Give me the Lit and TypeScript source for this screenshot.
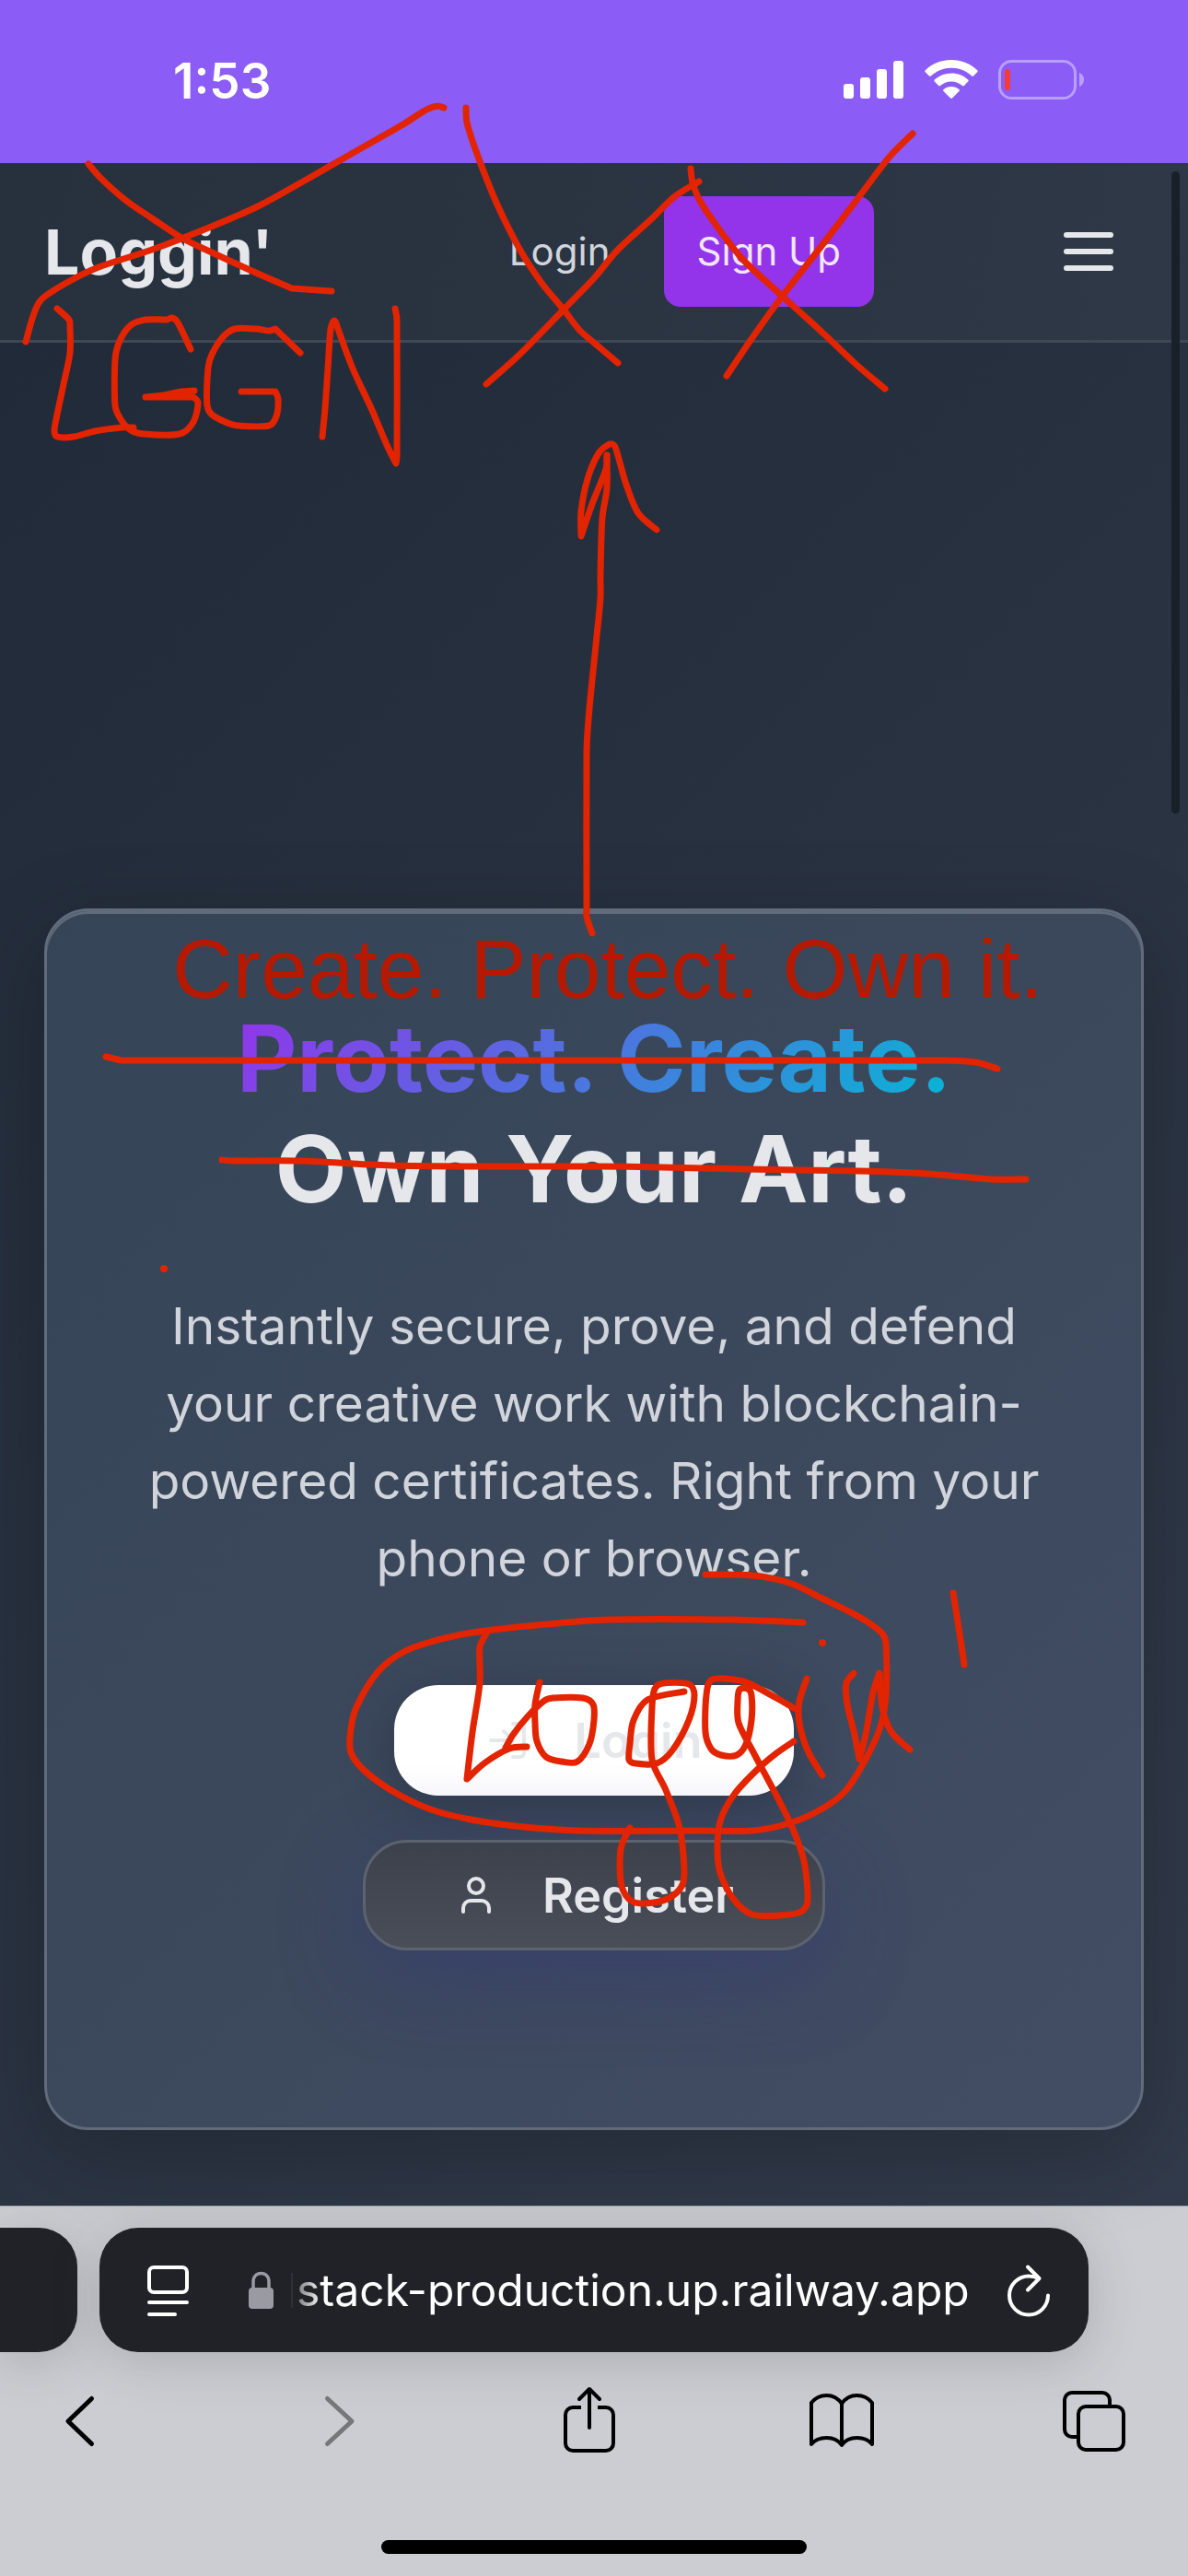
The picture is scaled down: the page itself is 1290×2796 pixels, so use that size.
import { LitElement, html, svg, css } from "lit";
import { customElement } from "lit/decorators.js";

type Point = [number, number];

// Pen strokes on the markup layer, as x,y pairs. A repeated point makes a sharp corner.
const STROKES: string[] = [
  "28,371 36,343 45,325 74,306 107,290 165,271 222,249 280,224 329,197 378,169 436,136 463,119 475,115 482,117",
  "96,178 109,193 136,217 165,237 197,258 230,274 280,297 317,313 317,313 360,316",
  "62,335 75,347 76,355 76,383 69,417 62,450 59,467 62,474 80,474 103,468 132,464 145,464",
  "207,379 193,350 187,345 181,347 158,347 142,353 130,370 125,390 125,440 131,455 142,467 156,471 195,471 210,458 215,437 210,431 210,431 158,431 158,431 177,429 197,425 211,424",
  "326,383 299,357 299,357 293,359 278,357 255,357 241,367 228,390 225,413 225,440 230,450 247,459 259,462 292,462 300,452 302,433 299,425 299,425 262,425",
  "350,474 353,443 356,400 359,357 363,348 367,357 383,400 403,443 420,483 430,503 430,503 431,495 431,347 429,335",
  "506,117 507,133 518,167 539,220 564,270 588,307 612,336 629,358 645,372 671,394",
  "528,417 564,385 612,336 645,302 670,272 707,238 733,213 759,197",
  "750,183 752,198 760,218 781,249 807,282 849,321 892,360 929,395 961,422",
  "991,145 966,170 937,208 892,267 849,322 818,365 789,408",
  "643,1013 637,995 637,985 637,815 640,769 647,700 652,649 652,624 654,562 659,530 659,494",
  "659,494 658,509 643,547 631,582 631,582 631,555 638,520 650,492 662,482 668,485 680,526 693,557 713,575",
  "115,1147 132,1151 132,1151 1028,1151 1028,1151 1060,1153 1083,1160",
  "241,1259 255,1260 325,1260 424,1265 535,1266 645,1266 719,1267 810,1269 933,1271 1007,1274 1077,1280 1114,1280",
  "872,1761 793,1758 660,1758 593,1763 527,1770 483,1778 440,1792 410,1815 387,1853 381,1877 381,1902 397,1923 433,1948 477,1967 543,1980 627,1987 753,1987 817,1987 860,1978 893,1963 917,1945 937,1915 955,1877 962,1840 962,1784 957,1772 933,1755 893,1735 857,1718 817,1710 766,1709",
  "528,1773 521,1788 521,1827 513,1880 507,1931 507,1931 527,1913 553,1898 572,1896",
  "586,1826 581,1850 581,1870 583,1890 593,1907 610,1912 627,1912 640,1893 645,1867 644,1850 633,1843 600,1843 591,1846 573,1863 557,1883 549,1897",
  "743,1836 703,1845 688,1867 684,1893 683,1910 690,1914 713,1914 730,1900 748,1867 754,1840 748,1828 720,1827 711,1833 708,1853 708,1910 723,1943 737,1980 742,2013 742,2043 730,2058 710,2065 687,2064 675,2047 674,2007 684,1984",
  "862,1854 843,1843 813,1827 797,1823 773,1823 767,1840 766,1880 772,1898 783,1905 800,1905 810,1893 816,1867 816,1840 812,1833 803,1834 801,1847 802,1870 817,1900 840,1943 860,1983 873,2020 877,2063 870,2075 847,2079 817,2078 797,2062 782,2033 779,2007 782,1977 797,1948 823,1920 843,1903 862,1890",
  "876,1822 868,1847 868,1870 877,1900 893,1927",
  "927,1816 919,1827 920,1850 928,1883 933,1909 933,1909 940,1883 948,1837 955,1816 955,1816 958,1853 968,1880 988,1899",
  "1035,1729 1042,1773 1047,1807",
];

// Smooth curve through every point of a stroke.
function smooth(data: string): string {
  const p = data.split(" ").map((s) => s.split(",").map(Number) as Point);
  let d = `M${p[0][0]} ${p[0][1]}`;
  for (let i = 0; i < p.length - 1; i++) {
    const a = p[Math.max(i - 1, 0)];
    const b = p[i];
    const c = p[i + 1];
    const e = p[Math.min(i + 2, p.length - 1)];
    const len = Math.hypot(c[0] - b[0], c[1] - b[1]);
    if (len === 0) continue;
    const handle = (v: Point): Point => {
      const m = Math.hypot(v[0], v[1]) || 1;
      const k = Math.min(m / 6, len / 3) / m;
      return [v[0] * k, v[1] * k];
    };
    const h1 = handle([c[0] - a[0], c[1] - a[1]]);
    const h2 = handle([e[0] - b[0], e[1] - b[1]]);
    d += `C${(b[0] + h1[0]).toFixed(1)} ${(b[1] + h1[1]).toFixed(1)} ${(c[0] - h2[0]).toFixed(1)} ${(c[1] - h2[1]).toFixed(1)} ${c[0]} ${c[1]}`;
  }
  return d;
}

@customElement("status-bar")
class StatusBar extends LitElement {
  static styles = css`
    :host {
      display: flex;
      justify-content: space-between;
      height: 177px;
      box-sizing: border-box;
      padding: 56px 112px 0 188px;
      background: #8b5cf6;
      color: #fff;
      font-family: Inter, "Liberation Sans", sans-serif;
    }
    .time {
      font-size: 53px;
      line-height: 64px;
      font-weight: 600;
    }
    .status {
      display: flex;
      gap: 22px;
      padding-top: 8px;
    }
    .status svg {
      display: block;
      height: 46px;
    }
  `;
  render() {
    return html`
      <time class="time">1:53</time>
      <div class="status">
        <svg width="66" height="46" viewBox="0 0 66 46" fill="#fff" aria-hidden="true">
          <rect x="0" y="27" width="11" height="16" rx="3" />
          <rect x="18" y="20" width="11" height="23" rx="3" />
          <rect x="36" y="11" width="11" height="32" rx="3" />
          <rect x="54" y="2" width="11" height="41" rx="3" />
        </svg>
        <svg width="58" height="46" viewBox="0 0 58 46" fill="#fff" aria-hidden="true">
          <path d="M29 1C18 1 8 5 .8 12.2c-.7.7-.7 1.4 0 2L5 18.6c.6.6 1.2.6 1.8 0C12.800 13 20.500 9.800 29 9.800s16.200 3.200 22.200 8.800c.6.6 1.200.6 1.800 0l4.200-4.400c.7-.6.7-1.300 0-2C50 5 40 1 29 1z" />
          <path d="M29 15.600c-7 0-13.400 2.600-18.200 7-.7.7-.7 1.300 0 2l4.400 4.400c.6.6 1.200.6 1.800 0 3.200-2.900 7.400-4.600 12-4.600s8.800 1.700 12 4.600c.6.6 1.200.6 1.800 0l4.400-4.400c.7-.7.7-1.300 0-2-4.800-4.400-11.200-7-18.200-7z" />
          <path d="M29 30c-3.200 0-6.200 1.200-8.400 3-.7.7-.7 1.300-.1 2l7.500 7.600c.7.6 1.300.6 2 0l7.500-7.600c.6-.7.6-1.300-.1-2-2.200-1.800-5.200-3-8.400-3z" />
        </svg>
        <svg width="94" height="46" viewBox="0 0 94 46" aria-hidden="true">
          <rect x="1.500" y="2.500" width="82" height="40" rx="13" fill="none" stroke="#b99ffa" stroke-width="3" />
          <path d="M88 15c3 1 5 4 5 7.500s-2 6.500-5 7.500z" fill="#b99ffa" />
          <rect x="7" y="11" width="6" height="23" rx="3" fill="#f83a36" />
        </svg>
      </div>
    `;
  }
}

@customElement("site-nav")
class SiteNav extends LitElement {
  static styles = css`
    :host {
      display: flex;
      align-items: center;
      padding: 0 48px;
      height: 195px;
      box-sizing: border-box;
      border-bottom: 3px solid #404855;
      background: linear-gradient(100deg, #27303d, #2e3846);
      font-family: Inter, "Liberation Sans", sans-serif;
    }
    a {
      text-decoration: none;
    }
    .brand {
      color: #e5e7eb;
      font-size: 68px;
      font-weight: 700;
      line-height: 96px;
    }
    .links {
      display: flex;
      align-items: center;
      gap: 58px;
      margin-left: auto;
      margin-right: 173px;
      font-size: 42px;
      line-height: 60px;
    }
    .login {
      color: #d1d5db;
    }
    .signup {
      padding: 30px 36px;
      border-radius: 18px;
      background: #9333ea;
      color: #f1e6fd;
    }
    .menu {
      display: flex;
      flex-direction: column;
      align-items: center;
      justify-content: center;
      gap: 12px;
      width: 120px;
      height: 120px;
      padding: 0;
      border: 0;
      background: none;
    }
    .bar {
      width: 54px;
      height: 6px;
      border-radius: 3px;
      background: #e5e7eb;
    }
  `;
  render() {
    return html`
      <a class="brand" href="#">Loggin'</a>
      <nav class="links">
        <a class="login" href="#login">Login</a>
        <a class="signup" href="#signup">Sign Up</a>
      </nav>
      <button class="menu" aria-label="Menu">
        <span class="bar"></span><span class="bar"></span><span class="bar"></span>
      </button>
    `;
  }
}

@customElement("hero-card")
class HeroCard extends LitElement {
  static styles = css`
    :host {
      display: block;
      padding: 99px 48px 192px;
      border: 3px solid #606b7b;
      border-radius: 48px;
      background: linear-gradient(135deg, #354457, #3b485b 45%, #424d64);
      box-shadow: inset 0 3px #606b7b, 0 24px 96px rgba(0, 0, 0, 0.24);
      text-align: center;
      font-family: Inter, "Liberation Sans", sans-serif;
    }
    h1 {
      margin: 0 0 69px;
      color: #e5e7eb;
      font-size: 101px;
      line-height: 120px;
      font-weight: 700;
    }
    .accent {
      background: linear-gradient(135deg, #9333ea, #06b6d4);
      -webkit-background-clip: text;
      background-clip: text;
      color: transparent;
    }
    p {
      margin: 0 0 96px;
      color: #d1d5db;
      font-size: 55px;
      line-height: 84px;
    }
    .actions {
      display: flex;
      flex-direction: column;
      align-items: center;
      gap: 48px;
    }
    .action {
      display: flex;
      align-items: center;
      gap: 48px;
      height: 120px;
      padding: 0 96px;
      border: 3px solid #5d636e;
      border-radius: 48px;
      font-family: inherit;
      font-size: 52px;
      font-weight: 600;
      color: #e5e7eb;
    }
    .action svg {
      width: 48px;
      height: 48px;
      fill: none;
      stroke: currentColor;
      stroke-width: 2;
      stroke-linecap: round;
      stroke-linejoin: round;
    }
    .primary {
      border-color: transparent;
      background: linear-gradient(#fff 70%, #f9f9fc) border-box;
      box-shadow: 0 12px 60px rgba(25, 32, 48, 0.4);
    }
    .secondary {
      background: linear-gradient(#3c414c, #4a4e59) padding-box;
      box-shadow: 0 30px 90px rgba(47, 52, 125, 0.42);
    }
  `;
  render() {
    return html`
      <h1><span class="accent">Protect. Create.</span><br />Own Your Art.</h1>
      <p>
        Instantly secure, prove, and defend<br />your creative work with blockchain-<br />powered
        certificates. Right from your<br />phone or browser.
      </p>
      <div class="actions">
        <button class="action primary">
          <svg viewBox="0 0 24 24" aria-hidden="true">
            <path d="M15 3h4a2 2 0 0 1 2 2v14a2 2 0 0 1-2 2h-4M10 17l5-5-5-5M15 12H3" />
          </svg>
          Login
        </button>
        <button class="action secondary">
          <svg viewBox="0 0 24 24" aria-hidden="true">
            <path d="M19 21v-2a4 4 0 0 0-4-4H9a4 4 0 0 0-4 4v2" />
            <circle cx="12" cy="7" r="4" />
          </svg>
          Register
        </button>
      </div>
    `;
  }
}

@customElement("browser-bar")
class BrowserBar extends LitElement {
  static styles = css`
    :host {
      display: block;
      flex: 1;
      border-top: 1px solid #a0a6b2;
      background: #cccdd2;
      padding: 23px 0 24px;
      font-family: Inter, "Liberation Sans", sans-serif;
      overflow: hidden;
    }
    button {
      display: block;
      padding: 0;
      border: 0;
      background: none;
      font: inherit;
      color: inherit;
    }
    svg {
      display: block;
      fill: none;
      stroke: currentColor;
      stroke-width: 4;
      stroke-linecap: round;
      stroke-linejoin: round;
    }
    .tabs {
      display: flex;
      gap: 24px;
      padding-right: 108px;
    }
    .tab {
      height: 135px;
      border-radius: 42px;
      background: #202227;
      color: #fff;
      box-shadow: 0 10px 54px rgba(60, 64, 72, 0.22);
    }
    .previous {
      flex: 0 0 84px;
      border-radius: 0 42px 42px 0;
    }
    .current {
      display: flex;
      flex: 1;
      align-items: center;
      padding: 0 40px 0 50px;
    }
    .lock {
      margin-left: 60px;
    }
    .cut {
      width: 2px;
      height: 38px;
      margin: 0 4px 0 18px;
      background: #2e3035;
    }
    .address {
      flex: 1;
      text-align: left;
      white-space: nowrap;
      font-size: 48px;
      line-height: 60px;
      -webkit-mask-image: linear-gradient(90deg, rgba(0, 0, 0, 0.4), #000 28px);
      mask-image: linear-gradient(90deg, rgba(0, 0, 0, 0.4), #000 28px);
    }
    .tools {
      display: flex;
      justify-content: space-between;
      margin-top: 27px;
      padding: 0 54px 0 38px;
      color: #000;
    }
    .tools svg {
      width: 96px;
      height: 96px;
    }
    .forward {
      color: #76777b;
    }
    .home {
      width: 462px;
      height: 15px;
      margin: 81px auto 0;
      border-radius: 8px;
      background: #000;
    }
  `;
  render() {
    return html`
      <div class="tabs">
        <div class="tab previous"></div>
        <div class="tab current">
          <button aria-label="Page settings">
            <svg width="50" height="60" viewBox="0 0 50 60">
              <path d="M9 5h31a5 5 0 0 1 5 5v17a5 5 0 0 1-5 5H9a5 5 0 0 1-5-5V10a5 5 0 0 1 5-5zM4 43h41M4 56h28" />
            </svg>
          </button>
          <svg class="lock" width="30" height="42" viewBox="0 0 30 42" aria-hidden="true">
            <rect x="2" y="18" width="27" height="23" rx="4" fill="#9a9aa3" stroke="none" />
            <path d="M7 19v-7c0-6 3.500-9.500 8.500-9.500S24 6 24 12v7" stroke="#9a9aa3" stroke-width="3.500" />
          </svg>
          <span class="cut"></span>
          <button class="address">stack-production.up.railway.app</button>
          <button aria-label="Reload">
            <svg width="48" height="60" viewBox="0 0 48 60">
              <path d="M44 35.500A21 21 0 1 1 23 14.500c4 0 7 .8 11 2.500M22 4.500L34.500 17L22 29.500" />
            </svg>
          </button>
        </div>
      </div>
      <div class="tools">
        <button aria-label="Back">
          <svg viewBox="0 0 96 96"><path d="M61.500 23.500L36 48l25.500 24.500" stroke-width="5" /></svg>
        </button>
        <button class="forward" aria-label="Forward">
          <svg viewBox="0 0 96 96"><path d="M41.500 23.500L68 48L41.500 72.500" stroke-width="5" /></svg>
        </button>
        <button aria-label="Share">
          <svg viewBox="0 0 96 96">
            <path d="M42 33h-9a8 8 0 0 0-8 8v31a8 8 0 0 0 8 8h36a8 8 0 0 0 8-8V41a8 8 0 0 0-8-8h-9" stroke-linecap="butt" />
            <path d="M51 55V14M40 24l11-11 11 11" />
          </svg>
        </button>
        <button aria-label="Bookmarks">
          <svg viewBox="0 0 96 96">
            <path d="M49 29v44M49 29C45 23 39 20 32.500 20S20 23 16 28v45c4-5 10-7 16.500-7S45 68 49 74c4-6 10-8 16.500-8S78 68 82 73V28c-4-5-10-8-16.500-8S53 23 49 29z" />
          </svg>
        </button>
        <button aria-label="Tabs">
          <svg viewBox="0 0 96 96">
            <rect x="31" y="32" width="49" height="47" rx="8" />
            <path d="M65 32v-7a8 8 0 0 0-8-8H24a8 8 0 0 0-8 8v32a8 8 0 0 0 8 8h7" />
          </svg>
        </button>
      </div>
      <div class="home"></div>
    `;
  }
}

@customElement("app-root")
class AppRoot extends LitElement {
  static styles = css`
    :host {
      display: flex;
      flex-direction: column;
      position: relative;
      min-height: 100vh;
      overflow: hidden;
    }
    .page {
      position: relative;
      background: linear-gradient(135deg, #202937, #323b4b);
    }
    .hero {
      padding: 614px 48px 82px;
    }
    .scroll {
      position: absolute;
      top: 9px;
      right: 9px;
      width: 9px;
      height: 697px;
      border-radius: 5px;
      background: #18202a;
    }
    .ink {
      position: absolute;
      top: 0;
      left: 0;
      width: 100%;
      pointer-events: none;
    }
    .pen {
      fill: none;
      stroke: #e22400;
      stroke-width: 7;
      stroke-linecap: round;
      stroke-linejoin: round;
    }
    .dot {
      fill: #e22400;
    }
    .note {
      position: absolute;
      top: 1000px;
      left: 0;
      right: 0;
      padding-left: 30px;
      text-align: center;
      white-space: nowrap;
      color: #b51a00;
      font-family: "Liberation Sans", Arial, sans-serif;
      font-size: 91px;
      line-height: 104px;
      pointer-events: none;
    }
  `;
  render() {
    return html`
      <status-bar></status-bar>
      <div class="page">
        <site-nav></site-nav>
        <main class="hero"><hero-card></hero-card></main>
        <div class="scroll"></div>
      </div>
      <browser-bar></browser-bar>
      <div class="note">Create. Protect. Own it.</div>
      <svg class="ink" viewBox="0 0 1290 2796" aria-hidden="true">
        ${STROKES.map((s) => svg`<path class="pen" d=${smooth(s)} />`)}
        <circle class="dot" cx="178" cy="1377" r="4" />
        <circle class="dot" cx="893" cy="1783" r="4" />
      </svg>
    `;
  }
}
